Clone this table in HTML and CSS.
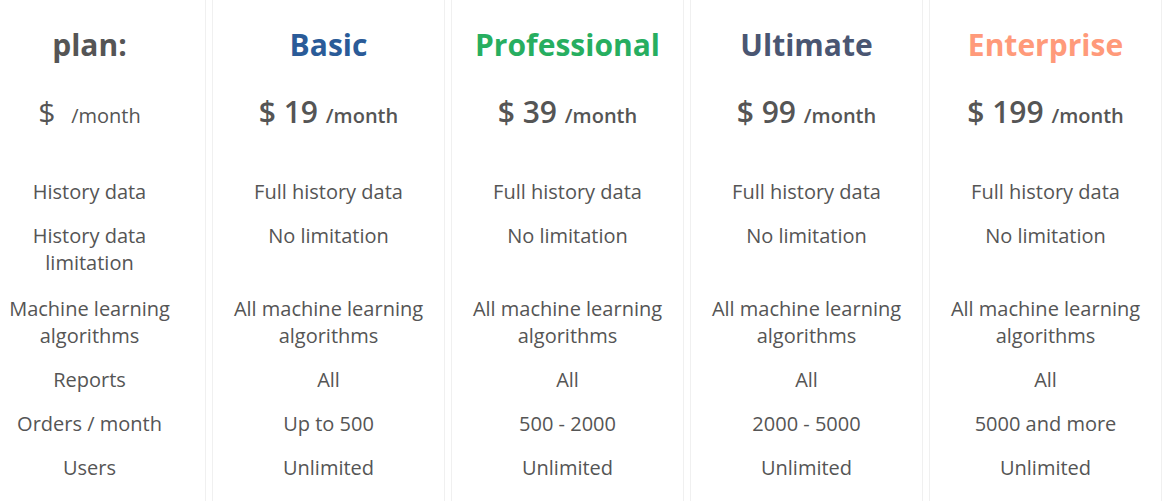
FILE: index.html
```html
<!DOCTYPE html>
<html lang="en">
<head>
<meta charset="utf-8">
<title>Pricing</title>
<link rel="stylesheet" href="styles.css">
</head>
<body>
<div class="pricing">
  <div class="plan plan-legend">
    <h3 class="plan-name">plan:</h3>
    <div class="price"><span class="currency">$</span><span class="amount"></span> <span class="period">/month</span></div>
    <ul class="features">
      <li>History data</li>
      <li class="tall">History data limitation</li>
      <li class="tall">Machine learning algorithms</li>
      <li>Reports</li>
      <li>Orders / month</li>
      <li>Users</li>
    </ul>
  </div>
  <div class="plan">
    <h3 class="plan-name basic">Basic</h3>
    <div class="price"><span class="currency">$</span> <span class="amount">19</span> <span class="period">/month</span></div>
    <ul class="features">
      <li>Full history data</li>
      <li class="tall">No limitation</li>
      <li class="tall">All machine learning algorithms</li>
      <li>All</li>
      <li>Up to 500</li>
      <li>Unlimited</li>
    </ul>
  </div>
  <div class="plan">
    <h3 class="plan-name professional">Professional</h3>
    <div class="price"><span class="currency">$</span> <span class="amount">39</span> <span class="period">/month</span></div>
    <ul class="features">
      <li>Full history data</li>
      <li class="tall">No limitation</li>
      <li class="tall">All machine learning algorithms</li>
      <li>All</li>
      <li>500 - 2000</li>
      <li>Unlimited</li>
    </ul>
  </div>
  <div class="plan">
    <h3 class="plan-name ultimate">Ultimate</h3>
    <div class="price"><span class="currency">$</span> <span class="amount">99</span> <span class="period">/month</span></div>
    <ul class="features">
      <li>Full history data</li>
      <li class="tall">No limitation</li>
      <li class="tall">All machine learning algorithms</li>
      <li>All</li>
      <li>2000 - 5000</li>
      <li>Unlimited</li>
    </ul>
  </div>
  <div class="plan">
    <h3 class="plan-name enterprise">Enterprise</h3>
    <div class="price"><span class="currency">$</span> <span class="amount">199</span> <span class="period">/month</span></div>
    <ul class="features">
      <li>Full history data</li>
      <li class="tall">No limitation</li>
      <li class="tall">All machine learning algorithms</li>
      <li>All</li>
      <li>5000 and more</li>
      <li>Unlimited</li>
    </ul>
  </div>
</div>
</body>
</html>
```

FILE: styles.css
```css
html, body {
  margin: 0;
  padding: 0;
  background: #fff;
}
body {
  font-family: "Open Sans", "Liberation Sans", sans-serif;
  color: #555;
  overflow: hidden;
}
.pricing {
  display: flex;
  gap: 6px;
  margin-left: -27px;
  min-height: 100vh;
}
.plan {
  flex: 0 0 233px;
  box-sizing: border-box;
  border-left: 1px solid #f0f0f0;
  border-right: 1px solid #f0f0f0;
  padding: 0 15px;
  text-align: center;
  min-height: 100vh;
}
.plan-name {
  margin: 27px 0 0;
  font-size: 30px;
  line-height: 36px;
  font-weight: 700;
  color: #555;
}
.plan-name.basic { color: #2a5b98; }
.plan-name.professional { color: #27ae60; }
.plan-name.ultimate { color: #4a5672; }
.plan-name.enterprise { color: #ff9a7a; }
.price {
  margin-top: 31px;
  font-size: 30px;
  line-height: 36px;
  font-weight: 600;
  color: #555;
}
.period {
  font-size: 20px;
}
.plan-legend .price {
  font-weight: 400;
}
.plan-legend .amount {
  display: inline-block;
  width: 8px;
}
.features {
  list-style: none;
  margin: 35px 0 0;
  padding: 0;
  font-size: 20px;
  line-height: 27px;
}
.features li {
  padding: 8.5px 0;
  min-height: 27px;
}
.features li.tall {
  min-height: 56px;
}
.features li.tall + li.tall {
  min-height: 54px;
}
```
